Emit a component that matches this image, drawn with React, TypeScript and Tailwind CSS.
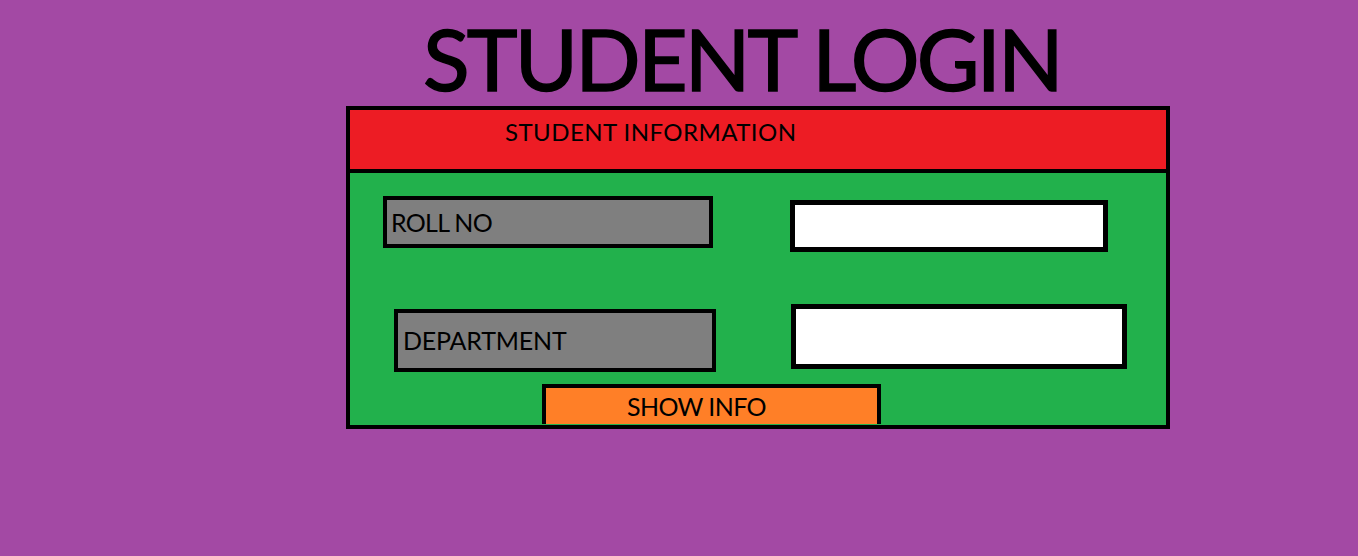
export default function App() {
  const font = "font-['Lato',_'Open_Sans',_sans-serif]";
  return (
    <div className={`min-h-[556px] w-full bg-[#a349a4] ${font}`}>
      <div className="flex flex-col w-[824px] ml-[346px]">
        <h1 className="mt-[15px] ml-[77px] text-[86px] leading-none font-normal tracking-[-2.8px] text-black [-webkit-text-stroke:1.5px_black]">
          STUDENT LOGIN
        </h1>

        <div className="mt-[5px] border-4 border-black flex flex-col">
          {/* header */}
          <div className="h-[63px] bg-[#ed1c24] border-b-4 border-black pl-[155px] pt-[10px]">
            <span className="text-[24px] leading-none tracking-[0.45px] text-black">STUDENT INFORMATION</span>
          </div>

          {/* body */}
          <div className="bg-[#22b14c] h-[252px] flex flex-col">
            <div className="flex items-start">
              <div className="mt-[23px] ml-[33px] w-[330px] h-[52px] border-4 border-black bg-[#7f7f7f] flex items-center pl-[4px]">
                <span className="text-[25px] leading-none tracking-[-0.7px] text-black">ROLL NO</span>
              </div>
              <div className="mt-[27px] ml-[77px] w-[318px] h-[52px] border-[5px] border-black bg-white" />
            </div>

            <div className="flex items-start mt-[52px]">
              <div className="mt-[5px] ml-[44px] w-[322px] h-[63px] border-4 border-black bg-[#7f7f7f] flex items-center pl-[5px]">
                <span className="text-[25px] leading-none tracking-[-0.2px] text-black">DEPARTMENT</span>
              </div>
              <div className="ml-[75px] w-[336px] h-[65px] border-[5px] border-black bg-white" />
            </div>

            <div className="mt-[12px] ml-[192px] w-[339px] h-[40px] border-4 border-b-0 border-black bg-[#ff7f27] flex items-center pl-[81px]">
              <span className="text-[25px] leading-none tracking-[-0.6px] text-black">SHOW INFO</span>
            </div>
          </div>
        </div>
      </div>
    </div>
  );
}
